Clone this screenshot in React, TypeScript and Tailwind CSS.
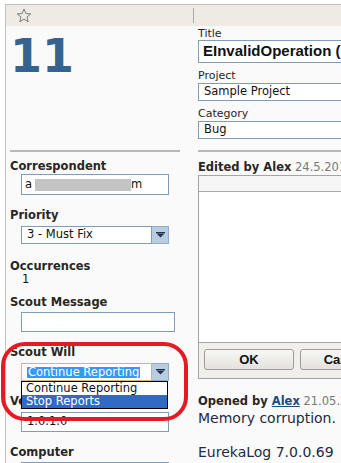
import React from "react";

function Star() {
  return (
    <svg width="16" height="15" viewBox="0 0 16 15">
      <path
        d="M8 1 L9.9 5.6 L14.8 5.9 L11 9 L12.2 13.8 L8 11.2 L3.8 13.8 L5 9 L1.2 5.9 L6.1 5.6 Z"
        fill="none"
        stroke="#7c7c7c"
        strokeWidth="1"
        strokeLinejoin="round"
      />
    </svg>
  );
}

function Arrow() {
  return (
    <svg width="9" height="6" viewBox="0 0 9 6">
      <rect x="0" y="0" width="9" height="1.2" fill="#1e3550" />
      <path d="M0.5 1.5 L8.5 1.5 L4.5 5.5 Z" fill="#1e3550" />
    </svg>
  );
}

function Select({ children, open }: { children: React.ReactNode; open?: boolean }) {
  return (
    <div className="ml-[15px] mt-[4px] flex h-[18px] w-[148px]">
      <div
        className={
          open
            ? "flex flex-1 items-center border border-[#d6b56e] bg-white pl-[5px]"
            : "flex flex-1 items-center border border-[#7f9db9] bg-white pl-[5px]"
        }
      >
        {children}
      </div>
      <div className="flex w-[17px] items-center justify-center border border-l-0 border-[#8fadcb] bg-[#b9cde1]">
        <Arrow />
      </div>
    </div>
  );
}

function Label({ children, className = "" }: { children: React.ReactNode; className?: string }) {
  return <div className={"ml-[4px] text-[11.5px] font-bold leading-[13px] text-[#2a2622] " + className}>{children}</div>;
}

export default function App() {
  return (
    <div className="relative h-[463px] w-[341px] overflow-hidden bg-white pl-[5px] pt-[4px] font-['DejaVu_Sans',sans-serif]">
      <div className="h-full border-l border-t border-[#c2c2c2] bg-[#fafafa]">
        <div className="flex h-[21px] items-center bg-[#efebe4]">
          <div className="w-[187px] pl-[10px]">
            <Star />
          </div>
          <div className="h-[15px] w-px bg-[#a9a9a9]" />
        </div>

        <div className="flex">
          <div className="w-[187px] shrink-0">
            <div className="mt-[7px] h-[46px] pl-[4px] text-[46px] font-bold leading-none text-[#35628f]">11</div>
            <div className="ml-[4px] mt-[71px] h-[2px] w-[170px] bg-[#b9b9b9]" />

            <Label className="mt-[8px]">Correspondent</Label>
            <div className="ml-[15px] mt-[1px] flex h-[21px] w-[148px] items-center border border-[#7f9db9] bg-white pl-[3px] text-[11.5px] text-[#111]">
              <span>a</span>
              <div className="ml-[3px] h-[12px] w-[96px] bg-[#c4c4c4]" />
              <span>m</span>
            </div>

            <Label className="mt-[14px]">Priority</Label>
            <Select>
              <span className="text-[11.5px] text-[#111]">3 - Must Fix</span>
            </Select>

            <Label className="mt-[16px]">Occurrences</Label>
            <div className="ml-[16px] text-[11.5px] leading-[13px] text-[#111]">1</div>

            <Label className="mt-[10px]">Scout Message</Label>
            <div className="ml-[15px] mt-[3px] h-[20px] w-[154px] border border-[#7f9db9] bg-white" />

            <Label className="mt-[14px]">Scout Will</Label>
            <Select open>
              <span className="bg-[#3399ff] px-px text-[11.5px] leading-[11px] text-white">Continue Reporting</span>
            </Select>

            <Label className="mt-[14px]">Version</Label>
            <div className="ml-[15px] mt-[4px] flex h-[20px] w-[148px] items-center border border-[#7f9db9] bg-white pl-[5px] text-[11.5px] text-[#111]">
              1.0.1.0
            </div>

            <Label className="mt-[14px]">Computer</Label>
            <div className="ml-[15px] mt-[3px] h-[20px] w-[148px] border border-[#7f9db9] bg-white" />
          </div>

          <div className="min-w-0 flex-1 pl-[5px]">
            <div className="mt-[1px] text-[11px] leading-[13px] text-[#2a2622]">Title</div>
            <div className="flex h-[23px] items-center overflow-hidden whitespace-nowrap border border-r-0 border-[#7f9db9] bg-white pl-[4px] font-['Liberation_Sans',Arial,sans-serif] text-[15px] font-bold text-[#111]">
              EInvalidOperation (
            </div>
            <div className="mt-[6px] text-[11px] leading-[13px] text-[#2a2622]">Project</div>
            <div className="mt-[1px] flex h-[18px] items-center border border-r-0 border-[#7f9db9] bg-white pl-[5px] text-[11.5px] text-[#111]">
              Sample Project
            </div>
            <div className="mt-[6px] text-[11px] leading-[13px] text-[#2a2622]">Category</div>
            <div className="mt-[1px] flex h-[18px] items-center border border-r-0 border-[#7f9db9] bg-white pl-[5px] text-[11.5px] text-[#111]">
              Bug
            </div>
            <div className="mt-[11px] h-[2px] bg-[#b9b9b9]" />

            <div className="mt-[9px] whitespace-nowrap text-[11.5px] leading-[13px] text-[#2a2622]">
              <span className="font-bold">Edited by Alex</span> <span className="text-[#777]">24.5.2013</span>
            </div>
            <div className="mt-[1px] border border-r-0 border-[#a4a4a4]">
              <div className="h-[16px] border-b border-[#a8a8a8] bg-[#f6f6f6]" />
              <div className="h-[150px] bg-white" />
              <div className="flex h-[36px] gap-[6px] border-t border-[#a8a8a8] bg-[#f0efeb] pl-[5px] pt-[6px]">
                <div className="flex h-[21px] w-[90px] shrink-0 items-center justify-center rounded-[3px] border border-[#9c9c9c] bg-gradient-to-b from-[#f8f8f6] to-[#e2e1dc] font-['Liberation_Sans',Arial,sans-serif] text-[13px] font-bold text-[#111]">
                  OK
                </div>
                <div className="flex h-[21px] w-[90px] shrink-0 items-center justify-center rounded-[3px] border border-[#9c9c9c] bg-gradient-to-b from-[#f8f8f6] to-[#e2e1dc] font-['Liberation_Sans',Arial,sans-serif] text-[13px] font-bold text-[#111]">
                  Cancel
                </div>
              </div>
            </div>

            <div className="mt-[16px] whitespace-nowrap text-[11.5px] leading-[13px] text-[#2a2622]">
              <span className="font-bold">Opened by </span>
              <span className="font-bold text-[#1d4a7c] underline">Alex</span>{" "}
              <span className="text-[#777]">21.05.2013</span>
            </div>
            <div className="mt-[2px] whitespace-nowrap text-[14px] leading-[17px] text-[#1a2b44]">Memory corruption.</div>
            <div className="mt-[17px] whitespace-nowrap text-[14px] leading-[17px] text-[#1a2b44]">EurekaLog 7.0.0.69</div>
          </div>
        </div>
      </div>

      <div className="absolute left-[21px] top-[381px] w-[147px] border border-black bg-white text-[11.5px] leading-[13px]">
        <div className="pl-[4px] text-[#111]">Continue Reporting</div>
        <div className="bg-[#316ac5] pl-[4px] text-white">Stop Reports</div>
      </div>

      <div className="pointer-events-none absolute left-[1px] top-[342px] h-[79px] w-[187px] rounded-[24px] border-4 border-[#e31b23]" />
    </div>
  );
}
